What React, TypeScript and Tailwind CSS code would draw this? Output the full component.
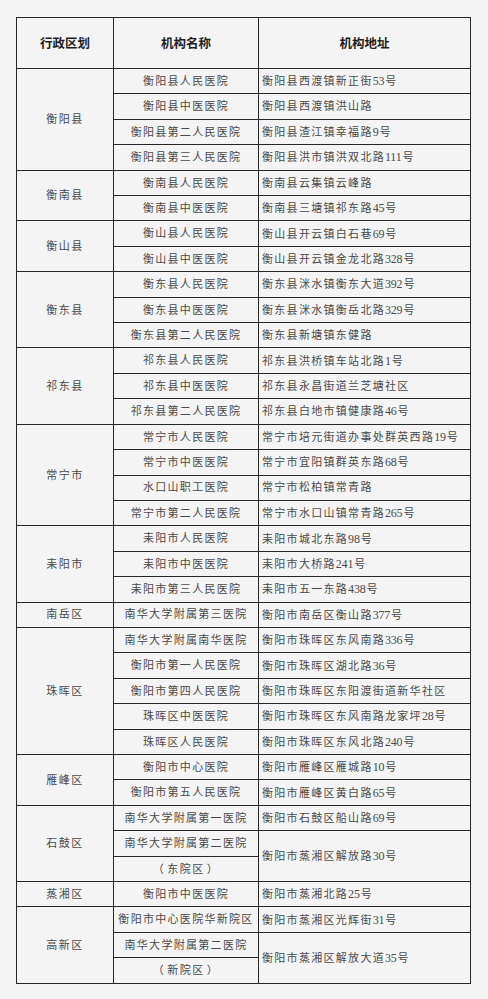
import React from 'react'

type Single = { name: string; address: string }
type Merged = { names: string[]; address: string }
type Item = Single | Merged

type Group = { region: string; items: Item[] }

const groups: Group[] = [
  {
    region: '衡阳县',
    items: [
      { name: '衡阳县人民医院', address: '衡阳县西渡镇新正街53号' },
      { name: '衡阳县中医医院', address: '衡阳县西渡镇洪山路' },
      { name: '衡阳县第二人民医院', address: '衡阳县渣江镇幸福路9号' },
      { name: '衡阳县第三人民医院', address: '衡阳县洪市镇洪双北路111号' },
    ],
  },
  {
    region: '衡南县',
    items: [
      { name: '衡南县人民医院', address: '衡南县云集镇云峰路' },
      { name: '衡南县中医医院', address: '衡南县三塘镇祁东路45号' },
    ],
  },
  {
    region: '衡山县',
    items: [
      { name: '衡山县人民医院', address: '衡山县开云镇白石巷69号' },
      { name: '衡山县中医医院', address: '衡山县开云镇金龙北路328号' },
    ],
  },
  {
    region: '衡东县',
    items: [
      { name: '衡东县人民医院', address: '衡东县洣水镇衡东大道392号' },
      { name: '衡东县中医医院', address: '衡东县洣水镇衡岳北路329号' },
      { name: '衡东县第二人民医院', address: '衡东县新塘镇东健路' },
    ],
  },
  {
    region: '祁东县',
    items: [
      { name: '祁东县人民医院', address: '祁东县洪桥镇车站北路1号' },
      { name: '祁东县中医医院', address: '祁东县永昌街道兰芝塘社区' },
      { name: '祁东县第二人民医院', address: '祁东县白地市镇健康路46号' },
    ],
  },
  {
    region: '常宁市',
    items: [
      { name: '常宁市人民医院', address: '常宁市培元街道办事处群英西路19号' },
      { name: '常宁市中医医院', address: '常宁市宜阳镇群英东路68号' },
      { name: '水口山职工医院', address: '常宁市松柏镇常青路' },
      { name: '常宁市第二人民医院', address: '常宁市水口山镇常青路265号' },
    ],
  },
  {
    region: '耒阳市',
    items: [
      { name: '耒阳市人民医院', address: '耒阳市城北东路98号' },
      { name: '耒阳市中医医院', address: '耒阳市大桥路241号' },
      { name: '耒阳市第三人民医院', address: '耒阳市五一东路438号' },
    ],
  },
  {
    region: '南岳区',
    items: [{ name: '南华大学附属第三医院', address: '衡阳市南岳区衡山路377号' }],
  },
  {
    region: '珠晖区',
    items: [
      { name: '南华大学附属南华医院', address: '衡阳市珠晖区东风南路336号' },
      { name: '衡阳市第一人民医院', address: '衡阳市珠晖区湖北路36号' },
      { name: '衡阳市第四人民医院', address: '衡阳市珠晖区东阳渡街道新华社区' },
      { name: '珠晖区中医医院', address: '衡阳市珠晖区东风南路龙家坪28号' },
      { name: '珠晖区人民医院', address: '衡阳市珠晖区东风北路240号' },
    ],
  },
  {
    region: '雁峰区',
    items: [
      { name: '衡阳市中心医院', address: '衡阳市雁峰区雁城路10号' },
      { name: '衡阳市第五人民医院', address: '衡阳市雁峰区黄白路65号' },
    ],
  },
  {
    region: '石鼓区',
    items: [
      { name: '南华大学附属第一医院', address: '衡阳市石鼓区船山路69号' },
      { names: ['南华大学附属第二医院', '（东院区）'], address: '衡阳市蒸湘区解放路30号' },
    ],
  },
  {
    region: '蒸湘区',
    items: [{ name: '衡阳市中医医院', address: '衡阳市蒸湘北路25号' }],
  },
  {
    region: '高新区',
    items: [
      { name: '衡阳市中心医院华新院区', address: '衡阳市蒸湘区光辉街31号' },
      { names: ['南华大学附属第二医院', '（新院区）'], address: '衡阳市蒸湘区解放大道35号' },
    ],
  },
]

const font = "font-['Liberation_Serif','Noto_Sans_CJK_SC',serif]"

// digits sit tight together, the Chinese characters are spaced out
function Spaced({ text }: { text: string }) {
  const parts = text.split(/(\d+)/)
  return (
    <>
      {parts.map((p, i) =>
        /^\d+$/.test(p) ? (
          <span key={i} className="text-[12px] tracking-[-0.2px] pr-[1px]">
            {p}
          </span>
        ) : (
          <span key={i}>{p}</span>
        )
      )}
    </>
  )
}

function NameCell({ text }: { text: string }) {
  const paren = text.startsWith('（')
  return (
    <div
      className={`flex h-[25.42px] items-center justify-center border-b border-[#262626] text-[11px] text-[#4a4a4a] ${
        paren ? 'tracking-[1.5px]' : 'tracking-[1.3px]'
      }`}
    >
      {paren ? (
        <span>
          （<span className="px-[2px]">{text.slice(1, -1)}</span>）
        </span>
      ) : (
        text
      )}
    </div>
  )
}

function AddressCell({ text, tall }: { text: string; tall?: boolean }) {
  return (
    <div
      className={`flex items-center border-b border-[#262626] pl-[3px] text-[11px] tracking-[1.3px] text-[#4a4a4a] ${
        tall ? 'h-[50.84px]' : 'h-[25.42px]'
      }`}
    >
      <div>
        <Spaced text={text} />
      </div>
    </div>
  )
}

export default function App() {
  return (
    <main className={`min-h-screen bg-[#f4f4f4] pl-4 pt-[17px] ${font}`}>
      <div className="w-[455px] border-l border-t border-[#262626]">
        {/* Header */}
        <div className="flex h-[51px] text-[12.5px] font-bold text-[#1f1f1f] font-['Noto_Sans_CJK_SC',sans-serif]">
          <div className="flex w-[97px] items-center justify-center border-b border-r border-[#262626]">行政区划</div>
          <div className="flex w-[145px] items-center justify-center border-b border-r border-[#262626]">机构名称</div>
          <div className="flex w-[212px] items-center justify-center border-b border-r border-[#262626]">机构地址</div>
        </div>

        {groups.map((g) => (
          <div key={g.region} className="flex">
            <div className="flex w-[97px] items-center justify-center border-b border-r border-[#262626] text-[11px] tracking-[1.5px] text-[#4a4a4a]">
              {g.region}
            </div>
            <div className="flex w-[357px] flex-col">
              {g.items.map((it, i) =>
                'names' in it ? (
                  <div key={i} className="flex">
                    <div className="w-[145px] border-r border-[#262626]">
                      {it.names.map((n) => (
                        <NameCell key={n} text={n} />
                      ))}
                    </div>
                    <div className="w-[212px] border-r border-[#262626]">
                      <AddressCell text={it.address} tall />
                    </div>
                  </div>
                ) : (
                  <div key={i} className="flex">
                    <div className="w-[145px] border-r border-[#262626]">
                      <NameCell text={it.name} />
                    </div>
                    <div className="w-[212px] border-r border-[#262626]">
                      <AddressCell text={it.address} />
                    </div>
                  </div>
                )
              )}
            </div>
          </div>
        ))}
      </div>
    </main>
  )
}
